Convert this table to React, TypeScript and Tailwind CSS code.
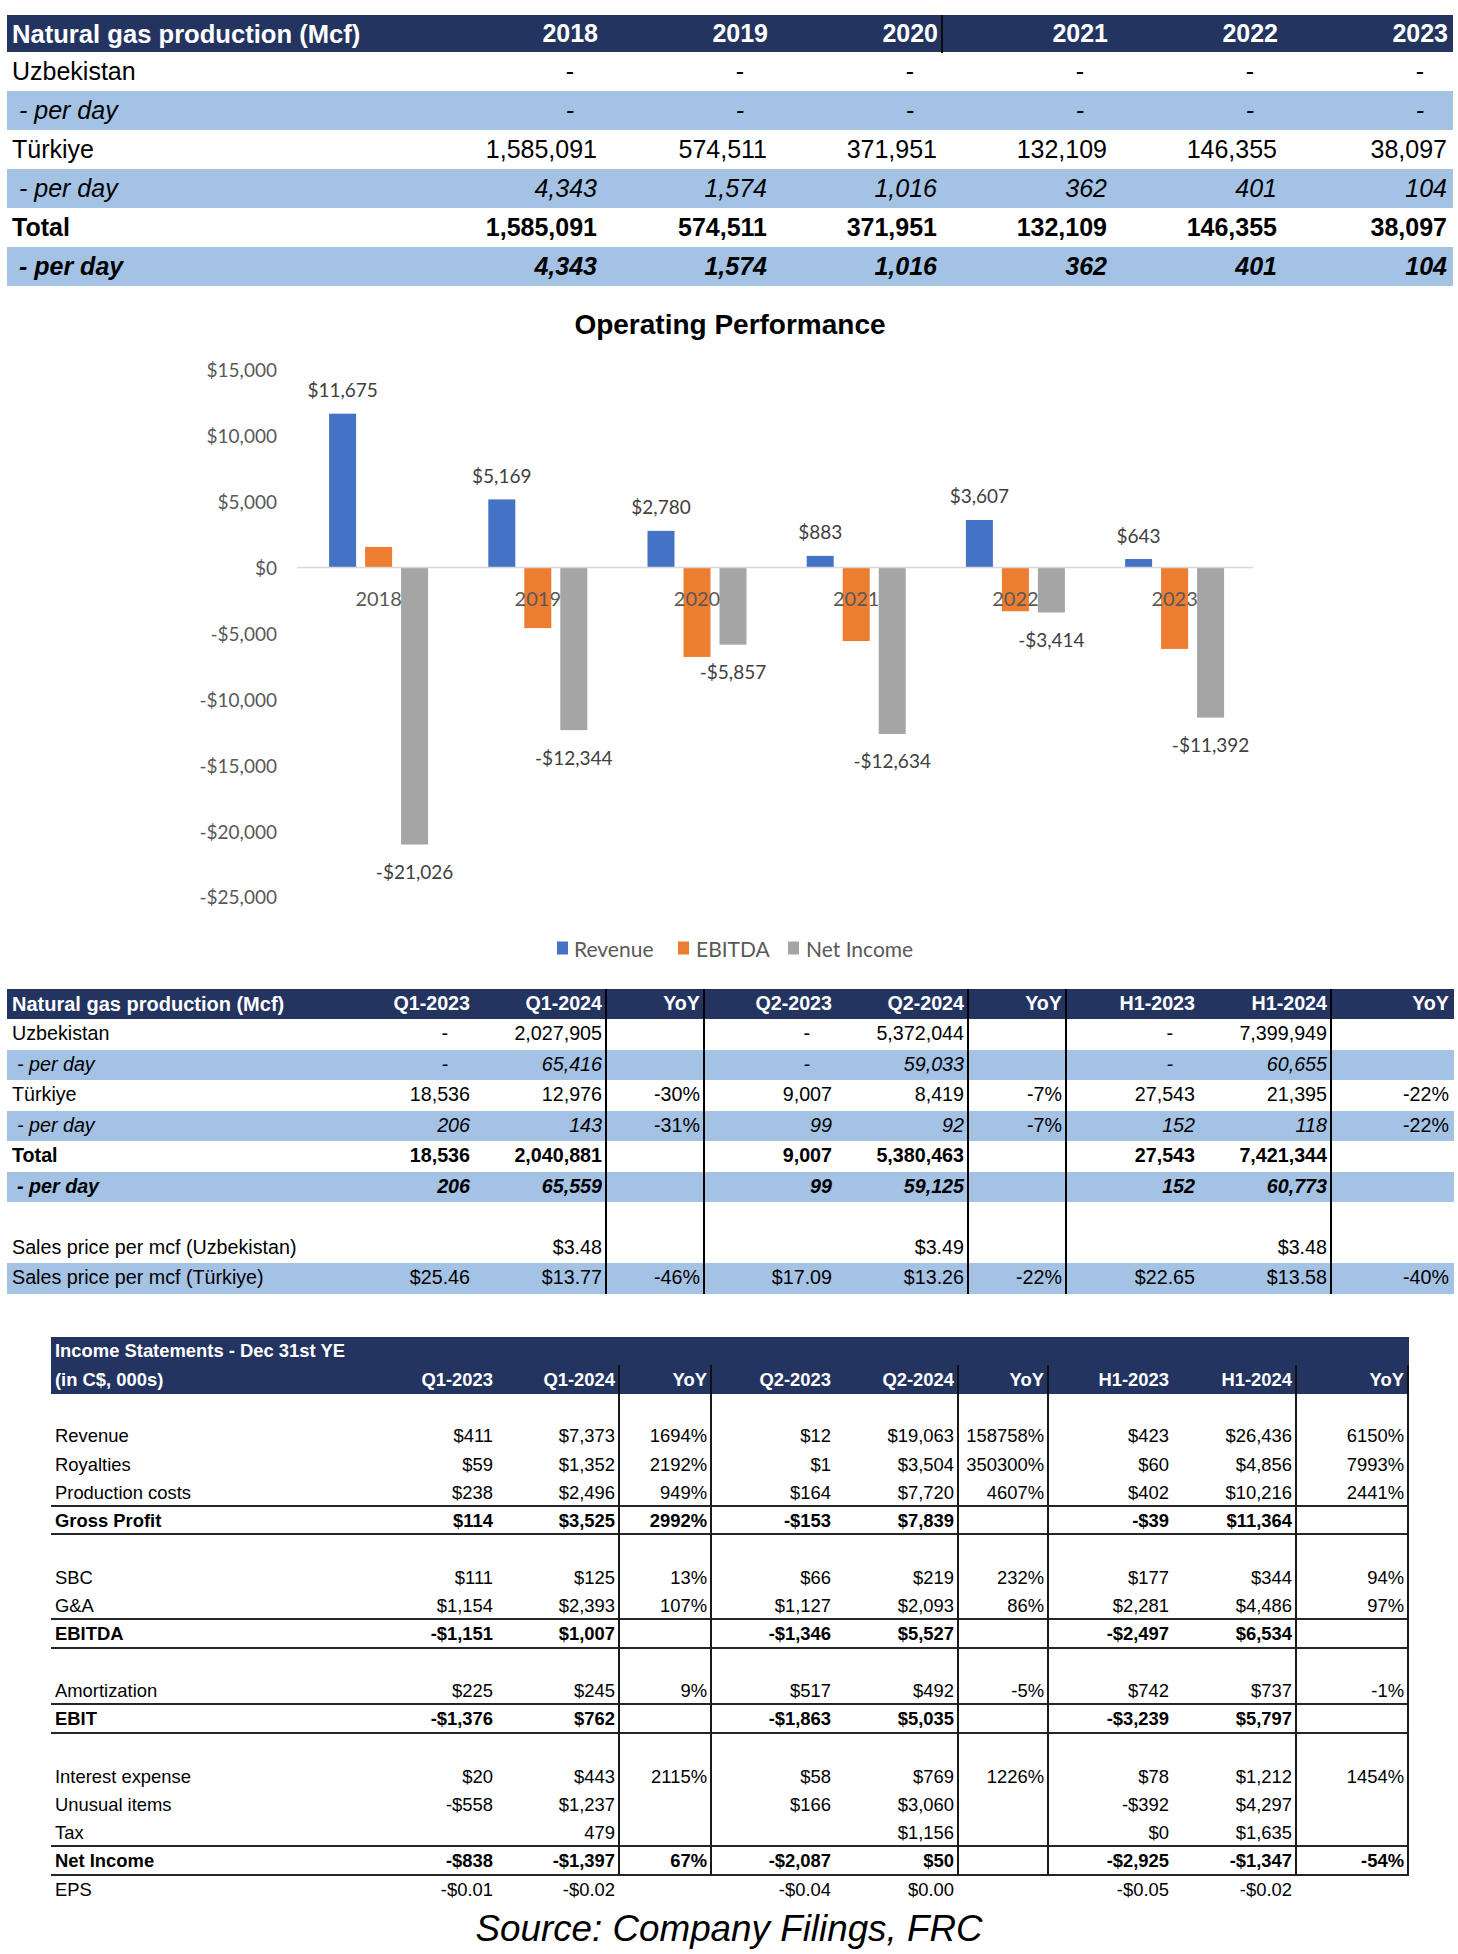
import React from "react";

const years = ["2018", "2019", "2020", "2021", "2022", "2023"];

type R1 = { label: string; vals: string[]; blue?: boolean; bold?: boolean; italic?: boolean; indent?: boolean };

const t1Rows: R1[] = [
  { label: "Uzbekistan", vals: ["-", "-", "-", "-", "-", "-"] },
  { label: "- per day", vals: ["-", "-", "-", "-", "-", "-"], blue: true, italic: true, indent: true },
  { label: "Türkiye", vals: ["1,585,091", "574,511", "371,951", "132,109", "146,355", "38,097"] },
  { label: "- per day", vals: ["4,343", "1,574", "1,016", "362", "401", "104"], blue: true, italic: true, indent: true },
  { label: "Total", vals: ["1,585,091", "574,511", "371,951", "132,109", "146,355", "38,097"], bold: true },
  { label: "- per day", vals: ["4,343", "1,574", "1,016", "362", "401", "104"], blue: true, italic: true, bold: true, indent: true },
];

type R2 = { label: string; vals: string[]; blue?: boolean; bold?: boolean; italic?: boolean; indent?: boolean };

const t2Head = ["Q1-2023", "Q1-2024", "YoY", "Q2-2023", "Q2-2024", "YoY", "H1-2023", "H1-2024", "YoY"];

const t2Rows: R2[] = [
  { label: "Uzbekistan", vals: ["-", "2,027,905", "", "-", "5,372,044", "", "-", "7,399,949", ""] },
  { label: "- per day", vals: ["-", "65,416", "", "-", "59,033", "", "-", "60,655", ""], blue: true, italic: true, indent: true },
  { label: "Türkiye", vals: ["18,536", "12,976", "-30%", "9,007", "8,419", "-7%", "27,543", "21,395", "-22%"] },
  { label: "- per day", vals: ["206", "143", "-31%", "99", "92", "-7%", "152", "118", "-22%"], blue: true, italic: true, indent: true },
  { label: "Total", vals: ["18,536", "2,040,881", "", "9,007", "5,380,463", "", "27,543", "7,421,344", ""], bold: true },
  { label: "- per day", vals: ["206", "65,559", "", "99", "59,125", "", "152", "60,773", ""], blue: true, italic: true, bold: true, indent: true },
  { label: "", vals: ["", "", "", "", "", "", "", "", ""] },
  { label: "Sales price per mcf (Uzbekistan)", vals: ["", "$3.48", "", "", "$3.49", "", "", "$3.48", ""] },
  { label: "Sales price per mcf (Türkiye)", vals: ["$25.46", "$13.77", "-46%", "$17.09", "$13.26", "-22%", "$22.65", "$13.58", "-40%"], blue: true },
];

type R3 = { label: string; vals: string[]; bold?: boolean; rule?: boolean; noLines?: boolean };
const E9 = ["", "", "", "", "", "", "", "", ""];
const t3Rows: R3[] = [
  { label: "", vals: E9 },
  { label: "Revenue", vals: ["$411", "$7,373", "1694%", "$12", "$19,063", "158758%", "$423", "$26,436", "6150%"] },
  { label: "Royalties", vals: ["$59", "$1,352", "2192%", "$1", "$3,504", "350300%", "$60", "$4,856", "7993%"] },
  { label: "Production costs", vals: ["$238", "$2,496", "949%", "$164", "$7,720", "4607%", "$402", "$10,216", "2441%"], rule: true },
  { label: "Gross Profit", vals: ["$114", "$3,525", "2992%", "-$153", "$7,839", "", "-$39", "$11,364", ""], bold: true, rule: true },
  { label: "", vals: E9 },
  { label: "SBC", vals: ["$111", "$125", "13%", "$66", "$219", "232%", "$177", "$344", "94%"] },
  { label: "G&A", vals: ["$1,154", "$2,393", "107%", "$1,127", "$2,093", "86%", "$2,281", "$4,486", "97%"], rule: true },
  { label: "EBITDA", vals: ["-$1,151", "$1,007", "", "-$1,346", "$5,527", "", "-$2,497", "$6,534", ""], bold: true, rule: true },
  { label: "", vals: E9 },
  { label: "Amortization", vals: ["$225", "$245", "9%", "$517", "$492", "-5%", "$742", "$737", "-1%"], rule: true },
  { label: "EBIT", vals: ["-$1,376", "$762", "", "-$1,863", "$5,035", "", "-$3,239", "$5,797", ""], bold: true, rule: true },
  { label: "", vals: E9 },
  { label: "Interest expense", vals: ["$20", "$443", "2115%", "$58", "$769", "1226%", "$78", "$1,212", "1454%"] },
  { label: "Unusual items", vals: ["-$558", "$1,237", "", "$166", "$3,060", "", "-$392", "$4,297", ""] },
  { label: "Tax", vals: ["", "479", "", "", "$1,156", "", "$0", "$1,635", ""], rule: true },
  { label: "Net Income", vals: ["-$838", "-$1,397", "67%", "-$2,087", "$50", "", "-$2,925", "-$1,347", "-54%"], bold: true, rule: true },
  { label: "EPS", vals: ["-$0.01", "-$0.02", "", "-$0.04", "$0.00", "", "-$0.05", "-$0.02", ""], noLines: true },
];

const t2Border = [false, true, true, false, true, true, false, true, false];
const t3Border = [false, true, true, false, true, true, false, true, true];

function Table1() {
  return (
    <div className="ml-[7px] mt-[15px] w-[1446px] text-[25px] text-black">
      <div className="grid grid-cols-[426px_170px_170px_170px_170px_170px_170px] h-[37px] bg-[#243461] text-white font-bold">
        <div className="flex items-center pl-[5px] text-[25.6px]">Natural gas production (Mcf)</div>
        {years.map((y, i) => (
          <div
            key={y}
            className={
              i === 2
                ? "flex items-center justify-end pr-[3px] border-r-2 border-[#0d0d0d]"
                : "flex items-center justify-end pr-[5px]"
            }
          >
            {y}
          </div>
        ))}
      </div>
      {t1Rows.map((r, ri) => (
        <div
          key={ri}
          className={`grid grid-cols-[426px_170px_170px_170px_170px_170px_170px] h-[39px] ${
            r.blue ? "bg-[#a4c2e4]" : "bg-white"
          } ${r.bold ? "font-bold" : "font-normal"} ${r.italic ? "italic" : "not-italic"}`}
        >
          <div className={r.indent ? "flex items-center pl-[12px]" : "flex items-center pl-[5px]"}>{r.label}</div>
          {r.vals.map((v, i) => (
            <div key={i} className={v === "-" ? "flex items-center justify-end pr-[29px]" : "flex items-center justify-end pr-[6px]"}>
              {v}
            </div>
          ))}
        </div>
      ))}
    </div>
  );
}

function Chart() {
  const zero = 281.5;
  const k = 0.013175;
  const x0 = 299;
  const cw = 159.2;
  const rev = [11675, 5169, 2780, 883, 3607, 643];
  const revL = ["$11,675", "$5,169", "$2,780", "$883", "$3,607", "$643"];
  const ebitda = [1560, -4600, -6790, -5580, -3320, -6180];
  const net = [-21026, -12344, -5857, -12634, -3414, -11392];
  const netL = ["-$21,026", "-$12,344", "-$5,857", "-$12,634", "-$3,414", "-$11,392"];
  const ticks = [15000, 10000, 5000, 0, -5000, -10000, -15000, -20000, -25000];
  const tickL = ["$15,000", "$10,000", "$5,000", "$0", "-$5,000", "-$10,000", "-$15,000", "-$20,000", "-$25,000"];
  const font = "Lato, 'Open Sans', sans-serif";
  const bar = (cx: number, v: number, color: string, key: string) => {
    const h = Math.abs(v) * k;
    const y = v >= 0 ? zero - h : zero;
    return <rect key={key} x={cx - 13.5} y={y} width={27} height={h} fill={color} />;
  };
  return (
    <svg width="1458" height="703" viewBox="0 0 1458 703" className="block">
      <text
        x="730"
        y="38"
        textAnchor="middle"
        dominantBaseline="central"
        fontFamily="'Liberation Sans', Arial, sans-serif"
        fontWeight="bold"
        fontSize="28"
        fill="#000"
      >
        Operating Performance
      </text>
      {ticks.map((t, i) => (
        <text
          key={t}
          x="277"
          y={zero - t * k}
          textAnchor="end"
          dominantBaseline="central"
          fontFamily={font}
          fontSize="19"
          fill="#595959"
        >
          {tickL[i]}
        </text>
      ))}
      {rev.map((_, i) => {
        const cx = x0 + cw * (i + 0.5);
        return (
          <g key={i}>
            {bar(cx - 36, rev[i], "#4472c4", "r")}
            {bar(cx, ebitda[i], "#ed7d31", "e")}
            {bar(cx + 36, net[i], "#a5a5a5", "n")}
          </g>
        );
      })}
      <line x1="297" y1={zero} x2="1253" y2={zero} stroke="#d9d9d9" strokeWidth="1.5" />
      {rev.map((v, i) => {
        const cx = x0 + cw * (i + 0.5);
        return (
          <g key={i} fontFamily={font} fontSize="19" fill="#404040">
            <text x={cx - 36} y={zero - v * k - 24} textAnchor="middle" dominantBaseline="central">
              {revL[i]}
            </text>
            <text x={cx + 36} y={zero - net[i] * k + 27} textAnchor="middle" dominantBaseline="central">
              {netL[i]}
            </text>
            <text x={cx} y="312" textAnchor="middle" dominantBaseline="central" fill="#595959" fontSize="20">
              {years[i]}
            </text>
          </g>
        );
      })}
      <g fontFamily={font} fontSize="21" fill="#595959">
        <rect x="557" y="655.5" width="11" height="13" fill="#4472c4" />
        <text x="574" y="662" dominantBaseline="central">Revenue</text>
        <rect x="678" y="655.5" width="11" height="13" fill="#ed7d31" />
        <text x="696" y="662" dominantBaseline="central">EBITDA</text>
        <rect x="788" y="655.5" width="11" height="13" fill="#a5a5a5" />
        <text x="806" y="662" dominantBaseline="central">Net Income</text>
      </g>
    </svg>
  );
}

function Table2() {
  return (
    <div className="ml-[7px] w-[1447px] text-[19.7px] text-black">
      <div className="grid grid-cols-[336px_132px_132px_98px_132px_132px_98px_133px_132px_122px] h-[30px] bg-[#243461] text-white font-bold">
        <div className="flex items-center pl-[5px] text-[20px]">Natural gas production (Mcf)</div>
        {t2Head.map((h, i) => (
          <div
            key={i}
            className={
              t2Border[i]
                ? "flex items-center justify-end pr-[3px] border-r-2 border-black"
                : "flex items-center justify-end pr-[5px]"
            }
          >
            {h}
          </div>
        ))}
      </div>
      {t2Rows.map((r, ri) => (
        <div
          key={ri}
          className={`grid grid-cols-[336px_132px_132px_98px_132px_132px_98px_133px_132px_122px] h-[30.5px] ${
            r.blue ? "bg-[#a4c2e4]" : "bg-white"
          } ${r.bold ? "font-bold" : "font-normal"}`}
        >
          <div
            className={
              r.indent
                ? `flex items-center pl-[10px] ${r.italic ? "italic" : "not-italic"}`
                : "flex items-center pl-[5px]"
            }
          >
            {r.label}
          </div>
          {r.vals.map((v, i) => {
            const yoy = i === 2 || i === 5 || i === 8;
            const it = r.italic && !yoy ? "italic" : "not-italic";
            const cls = t2Border[i]
              ? `flex items-center justify-end pr-[3px] border-r-2 border-black ${it}`
              : v === "-"
              ? `flex items-center justify-end pr-[27px] ${it}`
              : `flex items-center justify-end pr-[5px] ${it}`;
            return (
              <div key={i} className={cls}>
                {v}
              </div>
            );
          })}
        </div>
      ))}
    </div>
  );
}

function Table3() {
  return (
    <div className="ml-[51px] mt-[43.5px] w-[1358px] text-[18.4px] text-black">
      <div className="h-[28.35px] bg-[#243461] text-white font-bold flex items-center pl-[4px]">
        Income Statements - Dec 31st YE
      </div>
      <div className="grid grid-cols-[323px_123px_123px_92px_123px_124px_90px_124px_124px_112px] h-[28.35px] bg-[#243461] text-white font-bold">
        <div className="flex items-center pl-[4px]">(in C$, 000s)</div>
        {t2Head.map((h, i) => (
          <div
            key={i}
            className={
              t3Border[i]
                ? "flex items-center justify-end pr-[3px] border-r-2 border-[#111]"
                : "flex items-center justify-end pr-[4px]"
            }
          >
            {h}
          </div>
        ))}
      </div>
      {t3Rows.map((r, ri) => (
        <div
          key={ri}
          className={`grid grid-cols-[323px_123px_123px_92px_123px_124px_90px_124px_124px_112px] h-[28.35px] ${
            r.bold ? "font-bold" : "font-normal"
          } ${r.rule ? "border-b-2 border-[#262626]" : "border-b-0"}`}
        >
          <div className="flex items-center pl-[4px]">{r.label}</div>
          {r.vals.map((v, i) => (
            <div
              key={i}
              className={
                t3Border[i] && !r.noLines
                  ? "flex items-center justify-end pr-[3px] border-r-2 border-[#1a1a1a]"
                  : t3Border[i]
                  ? "flex items-center justify-end pr-[5px]"
                  : "flex items-center justify-end pr-[4px]"
              }
            >
              {v}
            </div>
          ))}
        </div>
      ))}
    </div>
  );
}

export default function App() {
  return (
    <div className="w-[1458px] min-h-[1954px] bg-white font-['Liberation_Sans',Arial,sans-serif] overflow-hidden">
      <Table1 />
      <Chart />
      <Table2 />
      <Table3 />
      <div className="h-[50px] flex items-center justify-center text-[36.8px] italic text-black">
        Source: Company Filings, FRC
      </div>
    </div>
  );
}
